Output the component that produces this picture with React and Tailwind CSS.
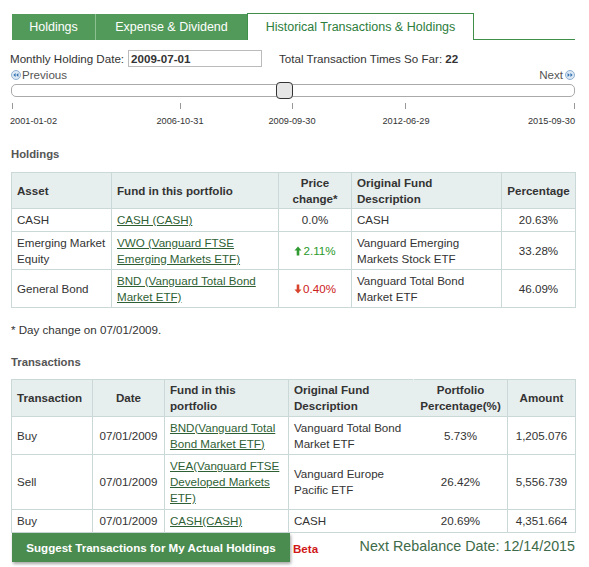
import React from 'react'

const HOLDINGS = [
  { asset: 'CASH', fund: 'CASH (CASH)', change: '0.0%', dir: 0, desc: 'CASH', pct: '20.63%' },
  { asset: 'Emerging Market Equity', fund: 'VWO (Vanguard FTSE Emerging Markets ETF)', change: '2.11%', dir: 1, desc: 'Vanguard Emerging Markets Stock ETF', pct: '33.28%' },
  { asset: 'General Bond', fund: 'BND (Vanguard Total Bond Market ETF)', change: '0.40%', dir: -1, desc: 'Vanguard Total Bond Market ETF', pct: '46.09%' },
]

const TRANSACTIONS = [
  { type: 'Buy', date: '07/01/2009', fund: 'BND(Vanguard Total Bond Market ETF)', desc: 'Vanguard Total Bond Market ETF', pct: '5.73%', amount: '1,205.076', h: 'h-[38px]' },
  { type: 'Sell', date: '07/01/2009', fund: 'VEA(Vanguard FTSE Developed Markets ETF)', desc: 'Vanguard Europe Pacific ETF', pct: '26.42%', amount: '5,556.739', h: 'h-[55px]' },
  { type: 'Buy', date: '07/01/2009', fund: 'CASH(CASH)', desc: 'CASH', pct: '20.69%', amount: '4,351.664', h: 'h-[23px]' },
]

const TICKS = [
  { left: 'left-[12px]', label: '2001-01-02', lpos: 'left-[10px]' },
  { left: 'left-[180px]', label: '2006-10-31', lpos: 'left-[180px] -translate-x-1/2' },
  { left: 'left-[292px]', label: '2009-09-30', lpos: 'left-[292px] -translate-x-1/2' },
  { left: 'left-[405px]', label: '2012-06-29', lpos: 'left-[406px] -translate-x-1/2' },
  { left: 'left-[574px]', label: '2015-09-30', lpos: 'left-[575px] -translate-x-full' },
]

function NavIcon({ flip }) {
  return (
    <svg width="10" height="10" viewBox="0 0 10 10" className={flip ? 'rotate-180' : ''}>
      <circle cx="5" cy="5" r="4.5" fill="#dce8f4" stroke="#8fb1d3" />
      <path d="M4.6 3 L2.4 5 L4.6 7 Z M7.4 3 L5.2 5 L7.4 7 Z" fill="#2f6fb0" />
    </svg>
  )
}

function Arrow({ up }) {
  return (
    <svg width="8" height="10" viewBox="0 0 8 10" className="inline-block mr-[1px] align-[-1px]">
      {up ? (
        <path d="M4 0.5 L7.5 4.5 L5.3 4.5 L5.3 9.5 L2.7 9.5 L2.7 4.5 L0.5 4.5 Z" fill="#2f9a2f" />
      ) : (
        <path d="M4 9.5 L7.5 5.5 L5.3 5.5 L5.3 0.5 L2.7 0.5 L2.7 5.5 L0.5 5.5 Z" fill="#d8432c" />
      )}
    </svg>
  )
}

const th = 'border border-[#cbd8d8] bg-[#e7eeee] font-bold px-[5px] align-middle leading-[16px]'
const td = 'border border-[#cbd8d8] px-[5px] align-middle leading-[16px]'
const link = 'text-[#2f5f35] underline'

export default function App() {
  return (
    <div className="w-[589px] h-[567px] bg-white overflow-hidden font-[family-name:Liberation_Sans,Arial,sans-serif] text-[11.6px] text-[#333]">
      {/* tabs */}
      <div className="flex items-end pt-[13px] ml-[12px] w-[563px]">
        <div className="h-[26px] w-[84px] bg-[#529a59] text-white text-[12.5px] flex items-center justify-center border-r border-[#8cc092]">
          Holdings
        </div>
        <div className="h-[26px] w-[151px] bg-[#529a59] text-white text-[12.5px] flex items-center justify-center">
          Expense &amp; Dividend
        </div>
        <div className="h-[27px] w-[227px] bg-white text-[#2d7d3c] text-[12.5px] flex items-center justify-center border border-b-0 border-[#3f8e4a]">
          Historical Transactions &amp; Holdings
        </div>
        <div className="flex-1 border-b border-[#3f8e4a]" />
      </div>

      {/* date row */}
      <div className="flex items-center mt-[10px] ml-[10px] h-[17px]">
        <span>Monthly Holding Date:</span>
        <div className="ml-[4px] w-[134px] h-[17px] border border-[#bbb] font-bold leading-[15px] px-[2px]">2009-07-01</div>
        <span className="ml-[17px]">
          Total Transaction Times So Far: <b>22</b>
        </span>
      </div>

      {/* prev / next */}
      <div className="flex items-center justify-between ml-[11px] w-[564px] h-[12px] mt-[2px]">
        <div className="flex items-center gap-[1px] text-[#555]">
          <NavIcon />
          <span>Previous</span>
        </div>
        <div className="flex items-center gap-[2px] text-[#555]">
          <span>Next</span>
          <NavIcon flip />
        </div>
      </div>

      {/* slider */}
      <div className="relative ml-[11px] w-[564px] h-[13px] mt-[3px] rounded-[5px] border border-[#aaa] bg-white">
        <div className="absolute left-[264px] top-[-3px] w-[17px] h-[17px] rounded-[4px] border border-[#333] bg-[#e6e6e6]" />
      </div>
      <div className="relative h-[30px]">
        {TICKS.map((t) => (
          <div key={t.label}>
            <div className={`absolute top-[6px] w-px h-[6px] bg-[#999] ${t.left}`} />
            <div className={`absolute top-[19px] whitespace-nowrap text-[9.2px] leading-[11px] ${t.lpos}`}>{t.label}</div>
          </div>
        ))}
      </div>

      {/* holdings */}
      <div className="ml-[11px] mt-[20px] font-bold text-[11.3px] text-[#555] leading-[14px]">Holdings</div>
      <table className="ml-[11px] mt-[11px] w-[564px] table-fixed border-collapse">
        <colgroup>
          <col className="w-[100px]" />
          <col className="w-[167px]" />
          <col className="w-[73px]" />
          <col className="w-[150px]" />
          <col className="w-[74px]" />
        </colgroup>
        <thead>
          <tr className="h-[36px]">
            <th className={`${th} text-left`}>Asset</th>
            <th className={`${th} text-left`}>Fund in this portfolio</th>
            <th className={`${th} text-center`}>Price change*</th>
            <th className={`${th} text-left`}>Original Fund Description</th>
            <th className={`${th} text-center`}>Percentage</th>
          </tr>
        </thead>
        <tbody>
          {HOLDINGS.map((r, i) => (
            <tr key={r.asset} className={i === 0 ? 'h-[23px]' : 'h-[38px]'}>
              <td className={td}>{r.asset}</td>
              <td className={td}>
                <span className={link}>{r.fund}</span>
              </td>
              <td className={`${td} text-center ${r.dir > 0 ? 'text-[#2a9a2a]' : r.dir < 0 ? 'text-[#cc2020]' : ''}`}>
                {r.dir !== 0 && <Arrow up={r.dir > 0} />}
                {r.change}
              </td>
              <td className={td}>{r.desc}</td>
              <td className={`${td} text-center`}>{r.pct}</td>
            </tr>
          ))}
        </tbody>
      </table>
      <div className="ml-[11px] mt-[15px] leading-[14px]">* Day change on 07/01/2009.</div>

      {/* transactions */}
      <div className="ml-[11px] mt-[18px] font-bold text-[11.3px] text-[#555] leading-[14px]">Transactions</div>
      <table className="ml-[11px] mt-[10px] w-[564px] table-fixed border-collapse">
        <colgroup>
          <col className="w-[81px]" />
          <col className="w-[72px]" />
          <col className="w-[124px]" />
          <col className="w-[125px]" />
          <col className="w-[94px]" />
          <col className="w-[68px]" />
        </colgroup>
        <thead>
          <tr className="h-[37px]">
            <th className={`${th} text-left`}>Transaction</th>
            <th className={`${th} text-center`}>Date</th>
            <th className={`${th} text-left`}>Fund in this portfolio</th>
            <th className={`${th} text-left border-r-[#e7eeee]`}>Original Fund Description</th>
            <th className={`${th} text-center border-l-[#e7eeee]`}>Portfolio Percentage(%)</th>
            <th className={`${th} text-center`}>Amount</th>
          </tr>
        </thead>
        <tbody>
          {TRANSACTIONS.map((r) => (
            <tr key={r.fund} className={r.h}>
              <td className={td}>{r.type}</td>
              <td className={`${td} text-center`}>{r.date}</td>
              <td className={td}>
                <span className={link}>{r.fund}</span>
              </td>
              <td className={`${td} border-r-white`}>{r.desc}</td>
              <td className={`${td} text-center border-l-white`}>{r.pct}</td>
              <td className={`${td} text-center`}>{r.amount}</td>
            </tr>
          ))}
        </tbody>
      </table>

      {/* footer */}
      <div className="flex items-center ml-[12px] w-[563px]">
        <div className="w-[278px] h-[29px] bg-[#4a8c50] text-white font-bold text-[11.6px] flex items-center justify-center shadow-[1px_2px_3px_rgba(0,0,0,0.35)]">
          Suggest Transactions for My Actual Holdings
        </div>
        <span className="ml-[3px] mt-[3px] text-[#d01818] font-bold text-[11.6px]">Beta</span>
        <span className="ml-auto text-[14.3px] text-[#3d6a48] -mt-[2px]">Next Rebalance Date: 12/14/2015</span>
      </div>
    </div>
  )
}
